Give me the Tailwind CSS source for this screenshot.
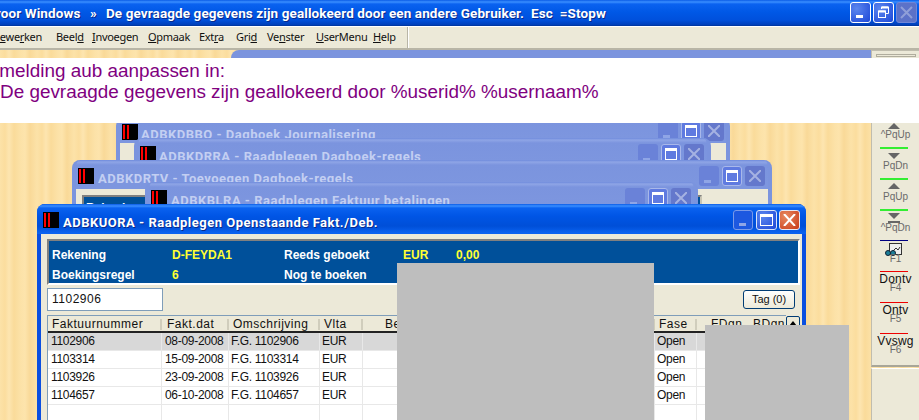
<!DOCTYPE html>
<html><head><meta charset="utf-8"><script src="https://cdn.jsdelivr.net/npm/@tailwindcss/browser@4"></script></head>
<body class="m-0">
<div class="relative w-[919px] h-[420px] overflow-hidden font-['Liberation_Sans',sans-serif] bg-[#fbe0a4] bg-[repeating-linear-gradient(90deg,#fce2a8_0px,#fbdd9e_5px,#fde5b0_9px,#fadb9a_14px,#fce2a8_21px,#fde4ac_25px,#f9d998_30px,#fce2a8_37px)]">

<!-- app title bar -->
<div class="absolute left-0 top-0 z-30 w-full h-[26px] flex items-center bg-[linear-gradient(180deg,#0a5ce6_0px,#3a8fff_2px,#0a62f0_4px,#0058e6_12px,#0050dc_20px,#003fb8_25px,#00318f_26px)] font-['Roboto',sans-serif] font-bold text-white text-[13.5px] tracking-[0.1px] whitespace-nowrap [text-shadow:1px_1px_0_#0a2a8a]">
  <span class="ml-[-6px] w-[96px]">voor Windows</span><span class="w-[16px]">»</span><span>De gevraagde gegevens zijn geallokeerd door een andere Gebruiker.&nbsp;&nbsp;Esc&nbsp;&nbsp;=Stopw</span>
</div>
<div class="absolute z-30 left-[850px] top-[2px] w-[21px] h-[21px] rounded-[3px] border border-white bg-[radial-gradient(circle_at_30%_30%,#5b86ee,#1d48d8)]"><div class="absolute left-[5px] top-[12px] w-[7px] h-[3px] bg-white"></div></div>
<div class="absolute z-30 left-[873px] top-[2px] w-[21px] h-[21px] rounded-[3px] border border-white bg-[radial-gradient(circle_at_30%_30%,#5b86ee,#1d48d8)]"><svg class="absolute left-[3px] top-[3px]" width="13" height="13" viewBox="0 0 13 13" fill="none" stroke="#fff"><path d="M4.5 3V1h7v6.5H9" stroke-width="1"/><path d="M4.5 1.5h7" stroke-width="2"/><rect x="1.5" y="5" width="7" height="6.5"/><path d="M1.5 5.5h7" stroke-width="2"/></svg></div>
<div class="absolute z-30 left-[896px] top-[2px] w-[21px] h-[21px] rounded-[3px] border border-[#6f86d8] bg-[#5c72c8]"><svg class="absolute left-[3px] top-[3px]" width="13" height="13" viewBox="0 0 13 13" stroke="#8f9fd8" stroke-width="2"><path d="M1 1l11 11M12 1L1 12"/></svg></div>

<!-- menu bar -->
<div class="absolute left-0 top-[26px] z-30 w-full h-[24px] bg-[#ece9d8] border-t border-t-white border-b-2 border-b-[#b8b5a6] flex items-center text-[11px] tracking-[-0.3px] text-[#111] font-['Noto_Sans',sans-serif] whitespace-nowrap">
  <span class="ml-[-7px] w-[63px]">B<u>e</u>we<u>r</u>ken</span><span class="w-[36px]">Beel<u>d</u></span><span class="w-[56px]"><u>I</u>nvoegen</span><span class="w-[51px]"><u>O</u>pmaak</span><span class="w-[37px]">Ext<u>r</u>a</span><span class="w-[31px]">Gri<u>d</u></span><span class="w-[49px]">Ve<u>n</u>ster</span><span class="w-[57px]"><u>U</u>serMenu</span><span class="w-[35px]"><u>H</u>elp</span>
  <div class="absolute left-[407px] top-0 h-full w-[2px] bg-[#fff] border-l border-l-[#b8b5a6]"></div>
</div>

<!-- window behind the band, only its top edge shows -->
<div class="absolute left-[231px] top-[50px] w-[640px] h-[30px] rounded-tl-[8px] bg-[#7b94de]"></div>

<!-- inactive window 1 -->
<div class="absolute left-[116px] top-[118px] w-[614px] h-[120px] rounded-t-[8px] bg-[linear-gradient(180deg,#8fa5e6_0px,#7b94de_4px,#7d96df_20px)] border-x-4 border-x-[#7b94de]">
  <svg class="absolute left-[2px] top-[6px]" width="16" height="16"><rect width="16" height="16"/><rect x="1" y="1" width="2" height="14" fill="#f00"/><rect x="5" y="1" width="2" height="14" fill="#f00"/></svg>
  <span class="absolute left-[21px] top-[7px] font-['Roboto',sans-serif] font-bold text-[13px] tracking-[0.5px] text-[#c3cff2] whitespace-nowrap">ADBKDBBO - Dagboek Journalisering</span>
  <div class="absolute left-0 right-0 top-[25px] bottom-0 bg-[#ece9d8]"></div>
  <div class="absolute left-[538px] top-[3px] w-[20px] h-[20px] rounded-[3px] bg-[#6a82d8]"><div class="absolute left-[5px] top-[14px] w-[7px] h-[3px] bg-[#8fa5e6]"></div></div>
  <div class="absolute left-[561px] top-[3px] w-[20px] h-[20px] rounded-[3px] border border-[#a9b8ea] bg-[#5f7ae0]"><div class="absolute left-[3px] top-[3px] w-[12px] h-[12px] border border-white border-t-[3px]"></div></div>
  <div class="absolute left-[584px] top-[3px] w-[20px] h-[20px] rounded-[3px] bg-[#6478cc]"><svg class="absolute left-[4px] top-[4px]" width="12" height="12" stroke="#a5b2e2" stroke-width="2"><path d="M0 0l12 12M12 0L0 12"/></svg></div>
</div>

<!-- inactive window 2 -->
<div class="absolute left-[134px] top-[138px] w-[577px] h-[60px] rounded-t-[8px] bg-[linear-gradient(180deg,#6f8bdc_0px,#8fa5e6_2px,#7b94de_5px,#7d96df_24px)] border-x-4 border-x-[#7b94de]">
  <svg class="absolute left-[2px] top-[8px]" width="16" height="16"><rect width="16" height="16"/><rect x="1" y="1" width="2" height="14" fill="#f00"/><rect x="5" y="1" width="2" height="14" fill="#f00"/></svg>
  <span class="absolute left-[21px] top-[9px] font-['Roboto',sans-serif] font-bold text-[13px] tracking-[0.5px] text-[#c3cff2] whitespace-nowrap">ADBKDRRA - Raadplegen Dagboek-regels</span>
  <div class="absolute left-[500px] top-[6px] w-[20px] h-[20px] rounded-[3px] bg-[#6a82d8]"><div class="absolute left-[5px] top-[14px] w-[7px] h-[3px] bg-[#8fa5e6]"></div></div>
  <div class="absolute left-[523px] top-[6px] w-[20px] h-[20px] rounded-[3px] border border-[#a9b8ea] bg-[#5f7ae0]"><div class="absolute left-[3px] top-[3px] w-[12px] h-[12px] border border-white border-t-[3px]"></div></div>
  <div class="absolute left-[546px] top-[6px] w-[20px] h-[20px] rounded-[3px] bg-[#6478cc]"><svg class="absolute left-[4px] top-[4px]" width="12" height="12" stroke="#a5b2e2" stroke-width="2"><path d="M0 0l12 12M12 0L0 12"/></svg></div>
</div>

<!-- inactive window 3 -->
<div class="absolute left-[72px] top-[160px] w-[700px] h-[80px] rounded-t-[8px] bg-[linear-gradient(180deg,#6f8bdc_0px,#8fa5e6_2px,#7b94de_5px,#7d96df_24px)] border-x-4 border-x-[#7b94de]">
  <svg class="absolute left-[2px] top-[8px]" width="16" height="16"><rect width="16" height="16"/><rect x="1" y="1" width="2" height="14" fill="#f00"/><rect x="5" y="1" width="2" height="14" fill="#f00"/></svg>
  <span class="absolute left-[22px] top-[9px] font-['Roboto',sans-serif] font-bold text-[13px] tracking-[0.5px] text-[#c3cff2] whitespace-nowrap">ADBKDRTV - Toevoegen Dagboek-regels</span>
  <div class="absolute left-0 right-0 top-[29px] bottom-0 bg-[#ece9d8]">
    <div class="absolute left-[6px] top-[6px] w-[620px] h-[50px] border-2 border-[#c8c5b4] border-l-[#808080] border-t-[#808080] bg-[#00509a]"><span class="absolute left-[2px] top-[2px] text-[12px] font-bold text-white">Rekening</span></div>
  </div>
  <div class="absolute left-[623px] top-[6px] w-[20px] h-[20px] rounded-[3px] bg-[#6a82d8]"><div class="absolute left-[5px] top-[14px] w-[7px] h-[3px] bg-[#8fa5e6]"></div></div>
  <div class="absolute left-[646px] top-[6px] w-[20px] h-[20px] rounded-[3px] border border-[#a9b8ea] bg-[#5f7ae0]"><div class="absolute left-[3px] top-[3px] w-[12px] h-[12px] border border-white border-t-[3px]"></div></div>
  <div class="absolute left-[669px] top-[6px] w-[20px] h-[20px] rounded-[3px] bg-[#6478cc]"><svg class="absolute left-[4px] top-[4px]" width="12" height="12" stroke="#a5b2e2" stroke-width="2"><path d="M0 0l12 12M12 0L0 12"/></svg></div>
</div>

<!-- inactive window 4 -->
<div class="absolute left-[145px] top-[182px] w-[553px] h-[40px] rounded-t-[8px] bg-[linear-gradient(180deg,#6f8bdc_0px,#8fa5e6_2px,#7b94de_5px,#7d96df_24px)] border-x-4 border-x-[#7b94de]">
  <svg class="absolute left-[2px] top-[8px]" width="16" height="16"><rect width="16" height="16"/><rect x="1" y="1" width="2" height="14" fill="#f00"/><rect x="5" y="1" width="2" height="14" fill="#f00"/></svg>
  <span class="absolute left-[22px] top-[9px] font-['Roboto',sans-serif] font-bold text-[13px] tracking-[0.5px] text-[#c3cff2] whitespace-nowrap">ADBKBLRA - Raadplegen Faktuur betalingen</span>
  <div class="absolute left-[476px] top-[6px] w-[20px] h-[20px] rounded-[3px] bg-[#6a82d8]"><div class="absolute left-[5px] top-[14px] w-[7px] h-[3px] bg-[#8fa5e6]"></div></div>
  <div class="absolute left-[499px] top-[6px] w-[20px] h-[20px] rounded-[3px] border border-[#a9b8ea] bg-[#5f7ae0]"><div class="absolute left-[3px] top-[3px] w-[12px] h-[12px] border border-white border-t-[3px]"></div></div>
  <div class="absolute left-[522px] top-[6px] w-[20px] h-[20px] rounded-[3px] bg-[#6478cc]"><svg class="absolute left-[4px] top-[4px]" width="12" height="12" stroke="#a5b2e2" stroke-width="2"><path d="M0 0l12 12M12 0L0 12"/></svg></div>
</div>

<!-- active window -->
<div class="absolute left-[37px] top-[204px] w-[769px] h-[240px] rounded-t-[8px] bg-[#0050dc] border-x-4 border-x-[#0a4fe0]">
  <div class="h-[30px] -mx-1 rounded-t-[8px] bg-[linear-gradient(180deg,#0a5ce6_0px,#3a8fff_2px,#0a62f0_4px,#0055e5_12px,#004fd8_22px,#0a62f0_29px)] relative">
    <svg class="absolute left-[6px] top-[8px]" width="16" height="16"><rect width="16" height="16"/><rect x="1" y="1" width="2" height="14" fill="#f00"/><rect x="5" y="1" width="2" height="14" fill="#f00"/></svg>
    <span class="absolute left-[26px] top-[9px] font-['Roboto',sans-serif] font-bold text-[13px] tracking-[0.5px] text-white whitespace-nowrap [text-shadow:1px_1px_0_#0a2a8a]">ADBKUORA - Raadplegen Openstaande Fakt./Deb.</span>
    <div class="absolute left-[696px] top-[6px] w-[20px] h-[20px] rounded-[3px] border border-[#7a9ae8] bg-[#1d58e0]"><div class="absolute left-[5px] top-[12px] w-[7px] h-[3px] bg-[#8fa5e6]"></div></div>
    <div class="absolute left-[719px] top-[6px] w-[21px] h-[20px] rounded-[3px] border border-[#d8e4fa] bg-[radial-gradient(circle_at_30%_30%,#5b86ee,#1d48d8)]"><div class="absolute left-[3px] top-[3px] w-[13px] h-[12px] border border-white border-t-[3px]"></div></div>
    <div class="absolute left-[742px] top-[6px] w-[21px] h-[20px] rounded-[3px] border border-[#e8e8f0] bg-[radial-gradient(circle_at_30%_30%,#e88a60,#c83a18)]"><svg class="absolute left-[3px] top-[3px]" width="13" height="12" stroke="#fff" stroke-width="2"><path d="M1 0l11 12M12 0L1 12"/></svg></div>
  </div>
  <div class="bg-[#ece9d8] h-[210px] relative">
    <!-- header panel -->
    <div class="absolute left-[6px] top-[5px] w-[753px] h-[46px] border-2 border-[#808080] border-b-white border-r-white bg-[#00509a] font-bold text-[12px] text-white">
      <span class="absolute left-[3px] top-[5px]">Rekening</span>
      <span class="absolute left-[3px] top-[25px]">Boekingsregel</span>
      <span class="absolute left-[123px] top-[5px] text-[#ffff33]">D-FEYDA1</span>
      <span class="absolute left-[123px] top-[25px] text-[#ffff33]">6</span>
      <span class="absolute left-[235px] top-[5px]">Reeds geboekt</span>
      <span class="absolute left-[235px] top-[25px]">Nog te boeken</span>
      <span class="absolute left-[354px] top-[5px] text-[#ffff33]">EUR</span>
      <span class="absolute left-[407px] top-[5px] text-[#ffff33]">0,00</span>
    </div>
    <!-- input and button -->
    <div class="absolute left-[6px] top-[54px] w-[116px] h-[23px] bg-white border border-[#7f9db9] pl-[4px] text-[12px] leading-[21px] tracking-[0.5px] text-[#111]">1102906</div>
    <div class="absolute left-[702px] top-[56px] w-[52px] h-[19px] rounded-[3px] border border-[#003c74] bg-[linear-gradient(180deg,#fff,#ece9d8)] text-center text-[11px] leading-[17px] text-[#111]">Tag (0)</div>
    <!-- table -->
    <div class="absolute left-[6px] top-[81px] w-[739px] h-[150px] bg-white border-l border-t border-[#7f9db9] text-[12px] tracking-[-0.3px] text-[#111] overflow-hidden whitespace-nowrap">
      <div class="flex h-[17px] bg-[#ece9d8] border-b-2 border-b-[#222] text-[12px] tracking-[0.5px]">
        <span class="w-[114px] pl-[4px] border-r-2 border-r-[#d0cdbc] h-[11px] mt-[3px] leading-[11px]">Faktuurnummer</span><span class="w-[67px] pl-[5px] border-r-2 border-r-[#d0cdbc] h-[11px] mt-[3px] leading-[11px]">Fakt.dat</span><span class="w-[91px] pl-[4px] border-r-2 border-r-[#d0cdbc] h-[11px] mt-[3px] leading-[11px]">Omschrijving</span><span class="w-[43px] pl-[4px] border-r-2 border-r-[#d0cdbc] h-[11px] mt-[3px] leading-[11px]">Vlta</span><span class="w-[292px] pl-[22px] border-r-2 border-r-[#d0cdbc] h-[11px] mt-[3px] leading-[11px]">Bedrag</span><span class="w-[42px] pl-[4px] border-r-2 border-r-[#d0cdbc] h-[11px] mt-[3px] leading-[11px]">Fase</span><span class="w-[42px] pl-[14px] h-[11px] mt-[3px] leading-[11px]">FDgn</span><span class="w-[44px] pl-[14px] h-[11px] mt-[3px] leading-[11px]">BDgn</span>
      </div>
      <div class="flex h-[18px] leading-[17px] bg-[#d8d8d8] border-b border-b-[#e8e8e8]">
        <span class="w-[114px] pl-[3px] border-r border-r-[#e8e8e8]">1102906</span><span class="w-[67px] pl-[3px] border-r border-r-[#e8e8e8]">08-09-2008</span><span class="w-[91px] pl-[2px] border-r border-r-[#e8e8e8]">F.G. 1102906</span><span class="w-[43px] pl-[2px] border-r border-r-[#e8e8e8]">EUR</span><span class="w-[292px] border-r border-r-[#e8e8e8]"></span><span class="w-[42px] pl-[2px] border-r border-r-[#e8e8e8]">Open</span>
      </div>
      <div class="flex h-[18px] leading-[17px] border-b border-b-[#e8e8e8]">
        <span class="w-[114px] pl-[3px] border-r border-r-[#e8e8e8]">1103314</span><span class="w-[67px] pl-[3px] border-r border-r-[#e8e8e8]">15-09-2008</span><span class="w-[91px] pl-[2px] border-r border-r-[#e8e8e8]">F.G. 1103314</span><span class="w-[43px] pl-[2px] border-r border-r-[#e8e8e8]">EUR</span><span class="w-[292px] border-r border-r-[#e8e8e8]"></span><span class="w-[42px] pl-[2px] border-r border-r-[#e8e8e8]">Open</span>
      </div>
      <div class="flex h-[18px] leading-[17px] border-b border-b-[#e8e8e8]">
        <span class="w-[114px] pl-[3px] border-r border-r-[#e8e8e8]">1103926</span><span class="w-[67px] pl-[3px] border-r border-r-[#e8e8e8]">23-09-2008</span><span class="w-[91px] pl-[2px] border-r border-r-[#e8e8e8]">F.G. 1103926</span><span class="w-[43px] pl-[2px] border-r border-r-[#e8e8e8]">EUR</span><span class="w-[292px] border-r border-r-[#e8e8e8]"></span><span class="w-[42px] pl-[2px] border-r border-r-[#e8e8e8]">Open</span>
      </div>
      <div class="flex h-[18px] leading-[17px] border-b border-b-[#e8e8e8]">
        <span class="w-[114px] pl-[3px] border-r border-r-[#e8e8e8]">1104657</span><span class="w-[67px] pl-[3px] border-r border-r-[#e8e8e8]">06-10-2008</span><span class="w-[91px] pl-[2px] border-r border-r-[#e8e8e8]">F.G. 1104657</span><span class="w-[43px] pl-[2px] border-r border-r-[#e8e8e8]">EUR</span><span class="w-[292px] border-r border-r-[#e8e8e8]"></span><span class="w-[42px] pl-[2px] border-r border-r-[#e8e8e8]">Open</span>
      </div>
      <div class="flex h-[18px]">
        <span class="w-[114px] border-r border-r-[#e8e8e8]"></span><span class="w-[67px] border-r border-r-[#e8e8e8]"></span><span class="w-[91px] border-r border-r-[#e8e8e8]"></span><span class="w-[43px] border-r border-r-[#e8e8e8]"></span><span class="w-[292px] border-r border-r-[#e8e8e8]"></span><span class="w-[42px] border-r border-r-[#e8e8e8]"></span>
      </div>
    </div>
    <div class="absolute left-[745px] top-[82px] w-[14px] h-[16px] rounded-[2px] border border-[#003c74] bg-[#ece9d8]"><svg class="absolute left-[2px] top-[4px]" width="8" height="5"><path d="M4 0l4 5H0z"/></svg></div>
  </div>
</div>

<!-- redactions -->
<div class="absolute left-[397px] top-[263px] w-[257px] h-[157px] bg-[#bebebe] z-10"></div>
<div class="absolute left-[705px] top-[325px] w-[144px] h-[95px] bg-[#bebebe] z-10"></div>

<!-- white message band -->
<div class="absolute left-0 top-[58px] z-20 w-full h-[65px] bg-white text-[#800080] text-[18.9px] leading-[21px] whitespace-nowrap">
  <div class="ml-[-6px] mt-[2px]">&nbsp;melding aub aanpassen in:</div>
  <div class="ml-0">De gevraagde gegevens zijn geallokeerd door %userid% %usernaam%</div>
</div>

<!-- right toolbar -->
<div class="absolute left-[871px] top-[50px] z-10 w-[48px] h-[317px] bg-[#ece9d8] border-l border-t border-[#c0bdae] border-b-2 border-b-[#a8a698] text-center text-[#6a6a6a] text-[10px] leading-[15px]">
  <div class="absolute left-[4px] top-[3px] w-[40px] h-[3px] border border-[#b0ad9e]"></div>
  <svg class="absolute left-[15px] top-[72px]" width="14" height="7"><path d="M7 0l6 6H1z" fill="#666"/></svg>
  <div class="absolute left-0 w-full top-[76px]">^PqUp</div>
  <div class="absolute left-[8px] top-[96px] w-[28px] h-[2px] bg-[#33ee33]"></div>
  <svg class="absolute left-[15px] top-[101px]" width="14" height="7"><path d="M7 7l6-6H1z" fill="#666"/></svg>
  <div class="absolute left-0 w-full top-[107px]">PqDn</div>
  <div class="absolute left-[8px] top-[127px] w-[28px] h-[2px] bg-[#33ee33]"></div>
  <svg class="absolute left-[15px] top-[132px]" width="14" height="7"><path d="M7 0l6 6H1z" fill="#666"/></svg>
  <div class="absolute left-0 w-full top-[138px]">PqUp</div>
  <div class="absolute left-[8px] top-[158px] w-[28px] h-[2px] bg-[#33ee33]"></div>
  <svg class="absolute left-[15px] top-[162px]" width="14" height="10"><path d="M7 6l6-6H1z" fill="#666"/><rect x="1" y="8" width="12" height="2" fill="#666"/></svg>
  <div class="absolute left-0 w-full top-[169px]">^PqDn</div>
  <div class="absolute left-[8px] top-[189px] w-[28px] h-[1px] bg-[#000080]"></div>
  <svg class="absolute left-[13px] top-[192px]" width="18" height="13"><rect x="4.5" y="0.5" width="12" height="11" fill="#eee" stroke="#333"/><path d="M8 8l3-3 2 2 2-3" stroke="#333" fill="none"/><circle cx="3" cy="10" r="2.5" fill="#1a7f9a" stroke="#123"/><circle cx="8" cy="10" r="2.5" fill="#1a7f9a" stroke="#123"/></svg>
  <div class="absolute left-0 w-full top-[200px]">F1</div>
  <div class="absolute left-[8px] top-[220px] w-[28px] h-[1px] bg-[#ee0000]"></div>
  <div class="absolute left-0 w-full top-[224px] text-[12px] leading-[9px] text-[#111] tracking-[0.2px]">Dontv</div>
  <div class="absolute left-0 w-full top-[233px] leading-[8px]">F4</div>
  <div class="absolute left-[8px] top-[251px] w-[28px] h-[1px] bg-[#ee0000]"></div>
  <div class="absolute left-0 w-full top-[255px] text-[12px] leading-[9px] text-[#111] tracking-[0.2px]">Ontv</div>
  <div class="absolute left-0 w-full top-[264px] leading-[8px]">F5</div>
  <div class="absolute left-[8px] top-[282px] w-[28px] h-[1px] bg-[#ee0000]"></div>
  <div class="absolute left-0 w-full top-[286px] text-[12px] leading-[9px] text-[#111] tracking-[0.2px]">Vvswg</div>
  <div class="absolute left-0 w-full top-[295px] leading-[8px]">F6</div>
</div>
<div class="absolute left-[871px] top-[368px] z-10 w-[48px] h-[52px] bg-[#ece9d8] border-l border-l-[#c0bdae] border-t border-t-white"></div>
</div>
</body></html>
